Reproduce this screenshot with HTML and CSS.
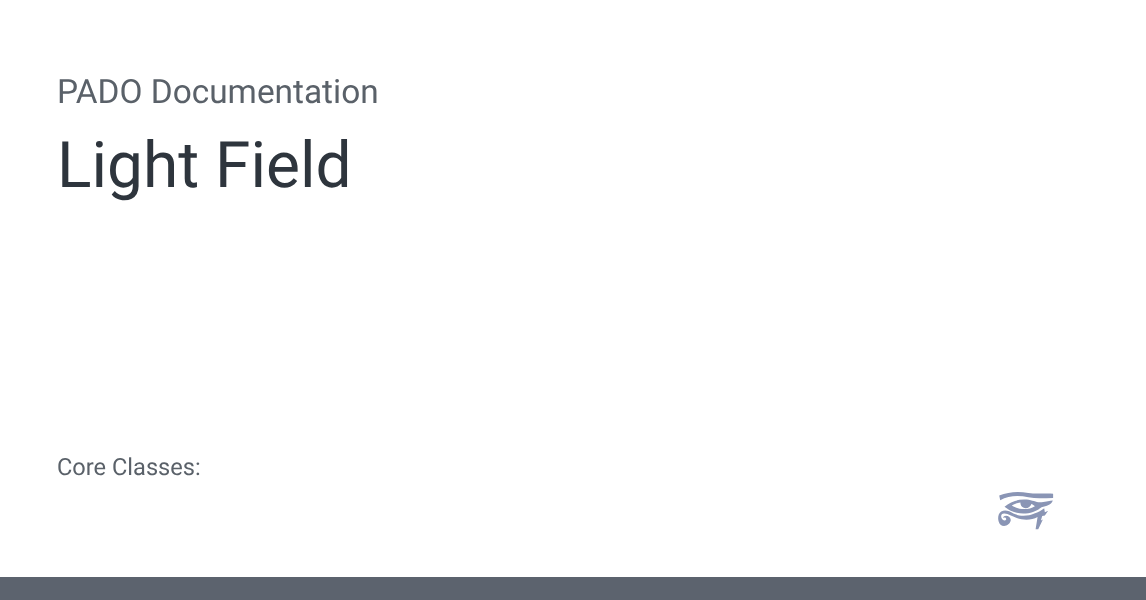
FILE: index.html
```html
<!DOCTYPE html>
<html lang="en">
<head>
    <meta charset="UTF-8">
    <meta name="viewport" content="width=device-width, initial-scale=1.0">
    <title>Light Field</title>
    <link rel="stylesheet" href="styles.css">
</head>
<body>
    <main class="card">
        <div class="heading">
            <p class="site-name">PADO Documentation</p>
            <h1 class="page-title">Light Field</h1>
        </div>
        <div class="bottom-row">
            <p class="core-classes">Core Classes:</p>
            <svg class="logo" width="60" height="41" viewBox="36 30 180 124" fill="#8a95b5">
                <path d="M42 50 C70 38 100 36 130 42 C155 46 180 42 205 44 L205 57 C180 57 155 60 130 55 C100 49 70 50 45 64 Z"/>
                <path fill-rule="evenodd" d="M58 84 C75 68 100 60 125 62 C145 64 155 72 170 70 C185 69 195 66 204 65 C200 78 185 82 170 85 C150 102 120 108 95 102 C80 98 68 92 58 84 Z M80 80 C90 74 98 72 106 71 C106 82 114 88 122 88 C130 88 137 82 139 75 C145 77 148 80 150 82 C130 95 100 93 80 80 Z"/>
                <path d="M148 104 C160 100 170 95 178 88 L180 100 L190 96 L180 110 L172 112 L168 125 L174 122 L160 152 L152 152 L158 115 C140 125 115 125 95 118 C80 112 70 105 58 104 C49 103 46 111 49 118 C52 126 61 127 63 122 C64 117 58 114 54 118 C54 108 75 108 77 124 C75 140 56 146 46 138 C36 128 36 106 48 98 C60 92 72 96 85 104 C105 114 130 112 148 104 Z"/>
            </svg>
        </div>
    </main>
    <footer class="footer-bar"></footer>
</body>
</html>
```

FILE: styles.css
```css
* {
    margin: 0;
    box-sizing: border-box;
    font-family: 'Roboto', sans-serif;
    text-rendering: geometricPrecision;
}

html, body {
    height: 100%;
}

body {
    display: flex;
    flex-direction: column;
    background-color: #fff;
    overflow: hidden;
}

.card {
    flex: 1;
    display: flex;
    flex-direction: column;
    justify-content: space-between;
    padding: 74px 89px 47px 57px;
    will-change: transform;
}

.site-name {
    font-size: 33.4px;
    line-height: 38px;
    color: #5a6169;
}

.page-title {
    margin-top: 16px;
    font-size: 64px;
    line-height: 75px;
    font-weight: 400;
    color: #2e353d;
}

.bottom-row {
    display: flex;
    justify-content: space-between;
    align-items: flex-start;
}

.core-classes {
    font-size: 23.6px;
    line-height: 30px;
    color: #5a6169;
}

.logo {
    margin-top: 37px;
    filter: blur(0.3px);
}

.footer-bar {
    height: 23px;
    background-color: #5c636e;
}
```
